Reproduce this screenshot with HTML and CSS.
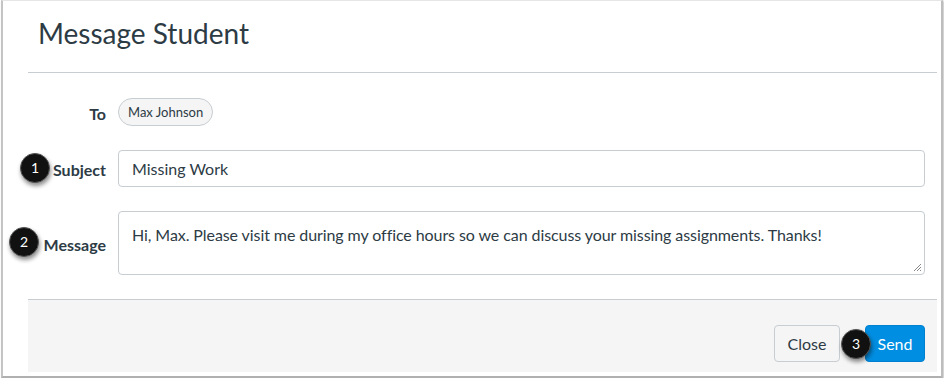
FILE: index.html
```html
<!DOCTYPE html>
<html>
<head>
<meta charset="utf-8">
<link rel="stylesheet" href="styles.css">
</head>
<body>
<div class="window">
  <div class="header"><h1 class="title">Message Student</h1></div>
  <div class="form">
    <div class="row row-to">
      <div class="label">To</div>
      <span class="chip">Max Johnson</span>
    </div>
    <div class="row">
      <div class="label"><span class="badge badge-1">1</span>Subject</div>
      <div class="input">Missing Work</div>
    </div>
    <div class="row">
      <div class="label"><span class="badge badge-2">2</span>Message</div>
      <div class="textarea">Hi, Max. Please visit me during my office hours so we can discuss your missing assignments. Thanks!
        <svg class="grip" width="10" height="10" viewBox="0 0 10 10"><path d="M9 2L2 9M9 5L5 9M9 8L8 9" stroke="#888" stroke-width="1"/></svg>
      </div>
    </div>
  </div>
  <div class="footer">
    <div class="btn btn-close">Close</div>
    <div class="btn btn-send"><span class="badge badge-3">3</span>Send</div>
  </div>
</div>
</body>
</html>
```
FILE: styles.css
```css
* { box-sizing: border-box; }
html, body { margin: 0; padding: 0; background: #ffffff; }
body { font-family: Lato, "Helvetica Neue", Arial, sans-serif; color: #2d3b45; }

.window {
  width: 942px;
  height: 378px;
  margin-left: 1px;
  border: 1px solid #c8c8c8;
  border-top-color: #e6e6e6;
  border-left: 2px solid #c4c4c4;
  border-right: 2px solid #bdbdbd;
  border-bottom: 2px solid #b0b0b0;
  box-shadow: 1px 1px 2px rgba(0,0,0,0.25);
  background: #fff;
  padding: 0 4px 0 25px;
  display: flex;
  flex-direction: column;
}

.header {
  height: 72px;
  flex: none;
  border-bottom: 1px solid #c7cdd1;
  padding-left: 10px;
  display: flex;
  align-items: center;
}
.title {
  margin: 0;
  font-weight: 400;
  font-size: 28px;
  color: #2d3b45;
  line-height: 1;
  padding-bottom: 7px;
}

.form {
  padding: 25px 12px 24px 0;
  display: flex;
  flex-direction: column;
  gap: 24px;
}
.row {
  display: flex;
  align-items: center;
  gap: 12px;
}
.row-to { height: 28px; }
.label {
  width: 78px;
  flex: none;
  text-align: right;
  font-weight: 700;
  font-size: 16px;
  padding-top: 2px;
  position: relative;
}
.chip {
  display: inline-flex;
  align-items: center;
  height: 28px;
  padding: 0 9px;
  border: 1px solid #c7cdd1;
  border-radius: 14px;
  background: #f5f5f5;
  font-size: 13px;
}
.input {
  flex: 1;
  height: 37px;
  border: 1px solid #c7cdd1;
  border-radius: 4px;
  padding: 0 13px;
  display: flex;
  align-items: center;
  font-size: 16px;
}
.textarea {
  flex: 1;
  height: 64px;
  border: 1px solid #c7cdd1;
  border-radius: 4px;
  padding: 12px 13px;
  font-size: 16px;
  line-height: 22px;
  letter-spacing: -0.08px;
  position: relative;
}
.grip { position: absolute; right: 2px; bottom: 2px; }

.footer {
  height: 73px;
  flex: none;
  background: #f5f5f5;
  border-top: 1px solid #c7cdd1;
  display: flex;
  justify-content: flex-end;
  align-items: flex-start;
  gap: 25px;
  padding: 25px 12px 0 0;
}
.btn {
  height: 37px;
  border-radius: 4px;
  display: flex;
  align-items: center;
  justify-content: center;
  font-size: 16px;
  position: relative;
}
.btn-close {
  width: 66px;
  background: #f5f5f5;
  border: 1px solid #c7cdd1;
  color: #2d3b45;
}
.btn-send {
  width: 60px;
  background: #008ee2;
  border: 1px solid #0081cf;
  color: #fff;
}

.badge {
  position: absolute;
  width: 30px;
  height: 30px;
  border-radius: 50%;
  background: #111;
  color: #fff;
  font-size: 14px;
  font-weight: 400;
  display: flex;
  align-items: center;
  justify-content: center;
  border: 1px solid #555;
  box-shadow: 1px 3px 4px rgba(0,0,0,0.45);
  line-height: 1;
  top: 50%;
  margin-top: -15px;
}
.badge-1 { left: -8px; margin-top: -16px; }
.badge-2 { left: -19px; margin-top: -16px; }
.badge-3 { left: -25px; }
```
